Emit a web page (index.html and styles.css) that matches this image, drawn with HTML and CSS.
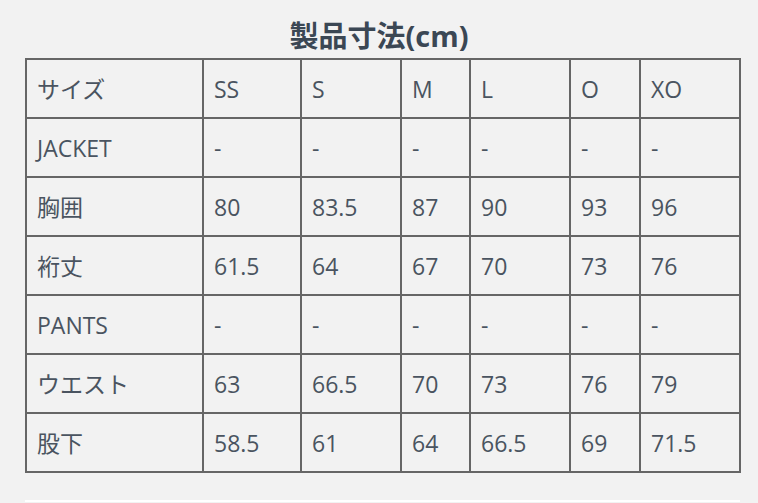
FILE: index.html
```html
<!DOCTYPE html>
<html lang="ja">
<head>
<meta charset="utf-8">
<link rel="stylesheet" href="styles.css">
</head>
<body>
<h2 class="title">製品寸法(cm)</h2>
<table class="size-table">
  <colgroup>
    <col class="c-label"><col class="c-ss"><col class="c-s"><col class="c-m"><col class="c-l"><col class="c-o"><col class="c-xo">
  </colgroup>
  <tr><td>サイズ</td><td>SS</td><td>S</td><td>M</td><td>L</td><td>O</td><td>XO</td></tr>
  <tr><td>JACKET</td><td>-</td><td>-</td><td>-</td><td>-</td><td>-</td><td>-</td></tr>
  <tr><td>胸囲</td><td>80</td><td>83.5</td><td>87</td><td>90</td><td>93</td><td>96</td></tr>
  <tr><td>裄丈</td><td>61.5</td><td>64</td><td>67</td><td>70</td><td>73</td><td>76</td></tr>
  <tr><td>PANTS</td><td>-</td><td>-</td><td>-</td><td>-</td><td>-</td><td>-</td></tr>
  <tr><td>ウエスト</td><td>63</td><td>66.5</td><td>70</td><td>73</td><td>76</td><td>79</td></tr>
  <tr><td>股下</td><td>58.5</td><td>61</td><td>64</td><td>66.5</td><td>69</td><td>71.5</td></tr>
</table>
<div class="next-block"></div>
</body>
</html>
```
FILE: styles.css
```css
html, body {
  margin: 0;
  padding: 0;
  background: #f2f2f2;
}
body {
  font-family: "Open Sans", "Noto Sans CJK JP", sans-serif;
  color: #4a5460;
}
.title {
  margin: 0;
  padding-top: 17px;
  height: 41px;
  text-align: center;
  font-size: 29px;
  line-height: 38px;
  font-weight: 700;
  color: #3b4754;
}
.size-table {
  margin-left: 25px;
  width: 715px;
  border-collapse: collapse;
  table-layout: fixed;
  border: 2px solid #666;
}
.c-label { width: 177px; }
.c-ss { width: 98px; }
.c-s { width: 100px; }
.c-m { width: 69px; }
.c-l { width: 100px; }
.c-o { width: 70px; }
.c-xo { width: 100px; }
.size-table td {
  border: 2px solid #666;
  height: 59px;
  padding: 0 0 0 10px;
  font-size: 23px;
  line-height: 30px;
  vertical-align: middle;
  box-sizing: border-box;
}
.next-block {
  margin: 27px 0 0 25px;
  width: 715px;
  border-top: 2px solid #ffffff;
}
```
